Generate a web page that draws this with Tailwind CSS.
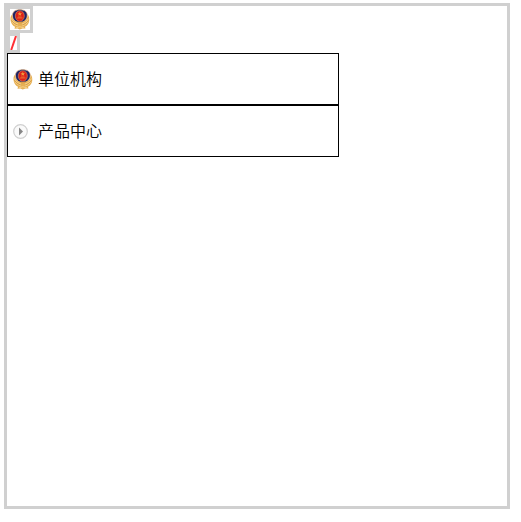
<!DOCTYPE html>
<html lang="zh-CN">
<head>
<meta charset="utf-8">
<meta name="viewport" content="width=device-width, initial-scale=1">
<title>单位机构</title>
<script src="https://cdn.jsdelivr.net/npm/@tailwindcss/browser@4"></script>
</head>
<body class="bg-white text-black font-['Noto_Sans_CJK_SC',sans-serif]">
<svg class="hidden" aria-hidden="true">
  <symbol id="emblem" viewBox="0 0 20 21">
    <path d="M9.800 .5C11.500 .5 13 1.200 14.300 1.500C16 2.200 17 4 17.200 5.500C17.500 10 15 13 9.800 14.200C4.500 13 2.200 10 2.500 5.500C2.800 4 3.700 2.200 5.300 1.500C6.700 1.200 8 .5 9.800 .5Z" fill="#1d2468" stroke="#e0b184" stroke-width=".7"/>
    <ellipse cx="9.800" cy="7" rx="4.500" ry="5.300" fill="#db2219" stroke="#dd8f5a" stroke-width=".6"/>
    <path d="M9.800 2.800L10.500 4.200L12 4.300L10.900 5.300L11.200 6.800L9.800 6L8.400 6.800L8.700 5.300L7.600 4.300L9.100 4.200Z" fill="#f29a3b"/>
    <path d="M7 9H12.600M8 8H11.600" stroke="#f0853a" stroke-width=".7"/>
    <path d="M2 5.500C.3 7 .2 10 .8 12.500C1.500 15 3 17 5 17.800L4.500 19.800L7.500 19.500L9.700 20.500L12.500 19.500L15.500 19.500L15 17.800C17.500 16.500 18.800 14.500 19.200 12C19.500 9.500 19.200 7 17.600 5.500C17.700 9 16.500 11 14.500 12C12 13.200 7.500 13.200 5 12C3 11 2 9 2 5.500Z" fill="#e6b055"/>
    <path d="M1.500 9.500C2.500 12.500 5 14 8 15M1.800 12.500C3 14.500 5 16 8 17M18.300 9.500C17.500 12.500 15 14 12 15M18 12.500C17 14.500 15 16 12 17M6 18.800L9.800 17.800L14 18.800" fill="none" stroke="#fae0a0" stroke-width=".7"/>
    <path d="M1.500 11.500C2.800 13.500 5 15 7.500 16M18.300 11.500C17 13.500 15 15 12.500 16M7.500 13.300L10 14L12.500 13.300" fill="none" stroke="#cf8e3c" stroke-width=".6"/>
  </symbol>
</svg>
<main class="mt-[3px] ml-1 mr-[11px] aspect-square border-3 border-[#d0d0d0] flex flex-col items-start">
  <div class="border-3 border-[#d0d0d0]">
    <svg class="block w-5 h-[21px]" role="img" aria-label="徽章"><use href="#emblem"/></svg>
  </div>
  <div class="border-3 border-[#d0d0d0]">
    <svg class="block w-[7px] h-[14px]" viewBox="0 0 7 14" aria-hidden="true"><path d="M1.200 14L6 0" stroke="#ff3035" stroke-width="2" fill="none"/></svg>
  </div>
  <ul class="w-full max-w-[332px] text-base leading-[22px] font-[350]">
    <li class="h-[52px] border border-black flex items-center gap-1 pl-[5px]">
      <span class="w-[21px]"><svg class="w-5 h-[21px]" aria-hidden="true"><use href="#emblem"/></svg></span>
      <span class="pb-0.5">单位机构</span>
    </li>
    <li class="h-[52px] border border-black flex items-center gap-1 pl-[5px]">
      <span class="w-[21px]"><svg class="w-[15px] h-[15px]" viewBox="0 0 15 15" aria-hidden="true"><circle cx="7.500" cy="7.500" r="6.800" fill="#fafafa" stroke="#d0d0d0" stroke-width="1.200"/><path d="M6 3.500L10 7.500L6 11.500Z" fill="#868686"/></svg></span>
      <span class="pb-0.5">产品中心</span>
    </li>
  </ul>
</main>
</body>
</html>
